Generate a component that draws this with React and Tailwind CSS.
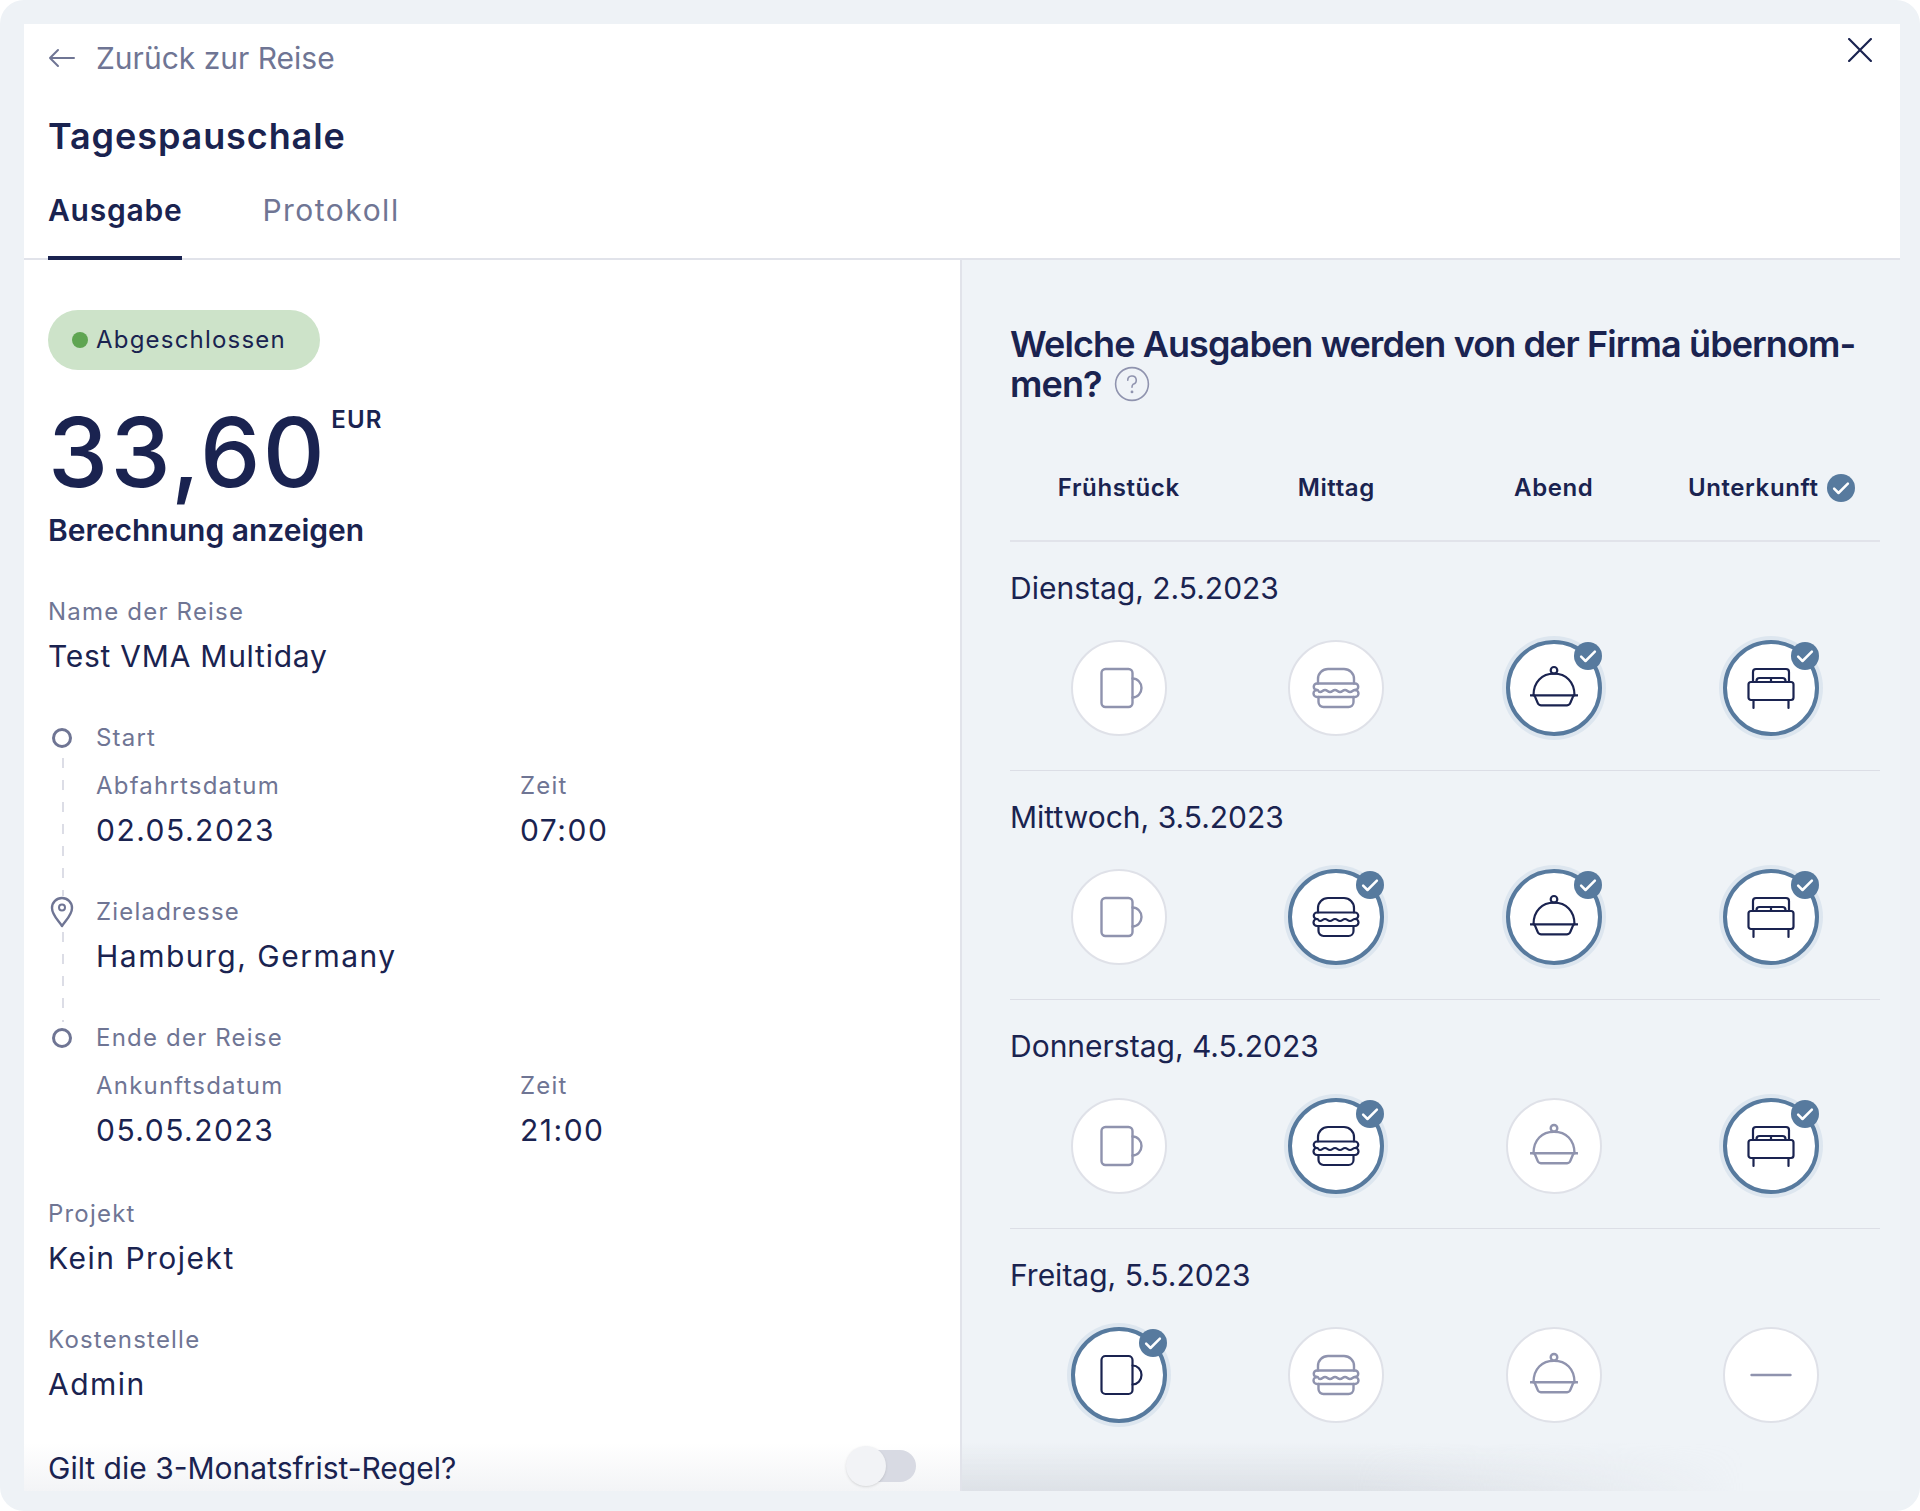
const NAVY = "text-[#1a2350]";

function MugIcon() {
  return (
    <>
      <rect x="6.5" y="5" width="31" height="38" rx="4" />
      <path d="M37.5 14.5A9 9.5 0 0 1 37.5 33.5" />
    </>
  );
}
function BurgerIcon() {
  return (
    <>
      <path d="M6 19.5V15A10 10 0 0 1 16 5H32A10 10 0 0 1 42 15V19.5" />
      <path d="M5 26A3.25 3.25 0 0 1 5 19.5H43A3.25 3.25 0 0 1 43 26C40.500 26 40.500 28 38 28S35.500 26 33 26 30.500 28 28 28 25.500 26 23 26 20.500 28 18 28 15.500 26 13 26 10.500 28 8 28 7.500 26 5 26Z" />
      <path d="M5 26A3.5 3.5 0 0 0 5 33H43A3.5 3.5 0 0 0 43 26" />
      <path d="M6.500 33V38A5 5 0 0 0 11.500 43H36.500A5 5 0 0 0 41.500 38V33" />
    </>
  );
}
function ClocheIcon() {
  return (
    <>
      <circle cx="24" cy="6.300" r="3.300" />
      <path d="M3.500 31.300C3.500 18 12 9.700 24 9.700S44.500 18 44.500 31.300" />
      <path d="M0.500 31.300H47.500" />
      <path d="M4.500 31.300L7.500 38.500A4 4 0 0 0 11 41.300H37A4 4 0 0 0 40.500 38.500L43.500 31.300" />
    </>
  );
}
function BedIcon() {
  return (
    <>
      <path d="M6 18V8A3 3 0 0 1 9 5H39A3 3 0 0 1 42 8V18" />
      <path d="M9.500 18V17A3 3 0 0 1 12.500 14H24V18M24 14H35.500A3 3 0 0 1 38.500 17V18" />
      <rect x="1.500" y="18" width="45" height="18" rx="2.500" />
      <path d="M6.500 36V44M41.500 36V44" />
    </>
  );
}
function DashIcon() {
  return <path d="M4.500 24H43.500" />;
}

const ICONS = { mug: MugIcon, burger: BurgerIcon, cloche: ClocheIcon, bed: BedIcon, dash: DashIcon };

function Check({ className }) {
  return (
    <span className={`flex h-7 w-7 items-center justify-center rounded-full bg-[#577a9e] ${className}`}>
      <svg viewBox="0 0 16 16" className="h-5 w-5" fill="none" stroke="#fff" strokeWidth="2" strokeLinecap="round" strokeLinejoin="round">
        <path d="M2.500 8.500L6 12L13.500 4.500" />
      </svg>
    </span>
  );
}

function Meal({ icon, on }) {
  const Icon = ICONS[icon];
  return (
    <div
      className={`relative flex h-24 w-24 items-center justify-center rounded-full bg-white ${
        on ? "border-4 border-[#577a9e] ring-4 ring-[#dde6ef]" : "border-2 border-[#dfe1e8]"
      }`}
    >
      <svg
        viewBox="0 0 48 48"
        className="h-12 w-12"
        fill="none"
        stroke={on ? "#1a2350" : "#8f93ae"}
        strokeWidth={on ? "2.200" : "2.400"}
        strokeLinecap="round"
        strokeLinejoin="round"
      >
        <Icon />
      </svg>
      {on && <Check className="absolute -top-0.5 -right-1" />}
    </div>
  );
}

const DAYS = [
  { date: "Dienstag, 2.5.2023", meals: [["mug", 0], ["burger", 0], ["cloche", 1], ["bed", 1]] },
  { date: "Mittwoch, 3.5.2023", meals: [["mug", 0], ["burger", 1], ["cloche", 1], ["bed", 1]] },
  { date: "Donnerstag, 4.5.2023", meals: [["mug", 0], ["burger", 1], ["cloche", 0], ["bed", 1]] },
  { date: "Freitag, 5.5.2023", meals: [["mug", 1], ["burger", 0], ["cloche", 0], ["dash", 0]] },
];

function Label({ children }) {
  return <div className="text-2xl leading-8 tracking-wider text-[#6f7594]">{children}</div>;
}
function Value({ children, tight }) {
  return <div className={`mt-2.5 text-3xl leading-9 ${tight ? "tracking-wide" : "tracking-wider"} ${NAVY}`}>{children}</div>;
}
function Ring() {
  return <span className="ml-1 block h-5 w-5 shrink-0 rounded-full border-[3px] border-[#6f7594]" />;
}
function Pin() {
  return (
    <svg viewBox="0 0 24 32" className="ml-0.5 h-8 w-6 shrink-0" fill="none" stroke="#6f7594" strokeWidth="2.400">
      <path d="M12 30C8 24 2 19 2 12A10 10 0 0 1 22 12C22 19 16 24 12 30Z" strokeLinejoin="round" />
      <circle cx="12" cy="11.500" r="3" strokeWidth="2" />
    </svg>
  );
}
function Connector() {
  return (
    <svg className="mt-1 ml-3.5 h-0 w-0.5 grow" preserveAspectRatio="none">
      <line x1="1" y1="0" x2="1" y2="100%" stroke="#dcdde6" strokeWidth="2" strokeDasharray="10 12" />
    </svg>
  );
}
function DateTime({ dateLabel, date, time }) {
  return (
    <div className="mt-4 grid grid-cols-[424px_1fr]">
      <div>
        <Label>{dateLabel}</Label>
        <Value>{date}</Value>
      </div>
      <div>
        <Label>Zeit</Label>
        <Value>{time}</Value>
      </div>
    </div>
  );
}

function Toggle() {
  return (
    <div className="relative -mt-1 h-8 w-14">
      <span className="block h-full w-full rounded-full bg-[#d8dae3]" />
      <span className="absolute -top-1 -left-3.5 h-10 w-10 rounded-full bg-[#f2f3f6] shadow" />
    </div>
  );
}

export default function App() {
  return (
    <div className="h-screen overflow-hidden rounded-3xl bg-[#eef2f6] pt-6 pr-5 pb-5 pl-6 font-['Inter',sans-serif]">
      <div className="flex h-full flex-col overflow-hidden bg-white">
        <header className="border-b-2 border-[#e1e3ea] px-6">
          <div className="flex items-center justify-between pt-4">
            <div className="flex items-center gap-5 text-3xl leading-9 text-[#6f7594]">
              <svg viewBox="0 0 28 20" className="h-5 w-7" fill="none" stroke="#6f7594" strokeWidth="2" strokeLinecap="round" strokeLinejoin="round">
                <path d="M2 10H26M10 2L2 10L10 18" />
              </svg>
              <span>Zurück zur Reise</span>
            </div>
            <svg viewBox="0 0 22 22" className="-mt-4 mr-1 h-6 w-6" fill="none" stroke="#1a2350" strokeWidth="2" strokeLinecap="round">
              <path d="M1 1L21 21M21 1L1 21" />
            </svg>
          </div>
          <h1 className={`mt-10 text-4xl leading-10 font-semibold tracking-wide ${NAVY}`}>Tagespauschale</h1>
          <nav className="mt-9 flex gap-20 text-3xl leading-9">
            <span className={`-mb-0.5 border-b-4 border-[#1a2350] pb-7 font-semibold tracking-wide ${NAVY}`}>Ausgabe</span>
            <span className="tracking-wider text-[#6f7594]">Protokoll</span>
          </nav>
        </header>

        <div className="flex min-h-0 flex-1">
          <section className="relative w-1/2 shrink-0 overflow-hidden border-r-2 border-[#e1e3ea] px-6 pt-12.5">
            <div className={`flex h-15 w-68 items-center gap-2 rounded-full bg-[#cde3c9] pl-6 text-2xl tracking-wider ${NAVY}`}>
              <span className="h-4 w-4 rounded-full bg-[#5fa552]" />
              Abgeschlossen
            </div>
            <div className={`mt-8.5 flex items-start ${NAVY}`}>
              <span className="text-8xl leading-24 font-medium tracking-wide">33,60</span>
              <span className="ml-1 text-2xl leading-8 font-semibold tracking-wider">EUR</span>
            </div>
            <div className={`mt-3 text-3xl leading-9 font-semibold ${NAVY}`}>Berechnung anzeigen</div>

            <div className="mt-12">
              <Label>Name der Reise</Label>
              <Value tight>Test VMA Multiday</Value>
            </div>

            <div className="mt-12 pb-0.5">
              <div className="flex">
                <div className="flex w-12 shrink-0 flex-col">
                  <div className="flex h-8 items-center"><Ring /></div>
                  <Connector />
                </div>
                <div className="flex-1 pb-12">
                  <Label>Start</Label>
                  <DateTime dateLabel="Abfahrtsdatum" date="02.05.2023" time="07:00" />
                </div>
              </div>
              <div className="flex">
                <div className="flex w-12 shrink-0 flex-col">
                  <div className="flex h-8 items-center"><Pin /></div>
                  <Connector />
                </div>
                <div className="flex-1 pb-12">
                  <Label>Zieladresse</Label>
                  <Value>Hamburg, Germany</Value>
                </div>
              </div>
              <div className="flex">
                <div className="flex w-12 shrink-0 flex-col">
                  <div className="flex h-8 items-center"><Ring /></div>
                </div>
                <div className="flex-1">
                  <Label>Ende der Reise</Label>
                  <DateTime dateLabel="Ankunftsdatum" date="05.05.2023" time="21:00" />
                </div>
              </div>
            </div>

            <div className="mt-12">
              <Label>Projekt</Label>
              <Value>Kein Projekt</Value>
            </div>
            <div className="mt-12">
              <Label>Kostenstelle</Label>
              <Value>Admin</Value>
            </div>

            <div className="pointer-events-none absolute inset-x-0 bottom-0 h-12 bg-linear-to-t from-gray-100 to-transparent" />
            <div className="relative mt-12 flex items-center justify-between pr-5">
              <span className={`text-3xl leading-9 ${NAVY}`}>Gilt die 3-Monatsfrist-Regel?</span>
              <Toggle />
            </div>
          </section>

          <section className="relative flex-1 overflow-hidden bg-[#eff3f7] pt-16 pr-5 pl-12">
            <h2 className={`text-4xl leading-10 font-semibold tracking-tight ${NAVY}`}>
              Welche Ausgaben werden von der Firma übernom-
              <br />
              <span className="inline-flex items-center gap-3">
                men?
                <svg viewBox="0 0 34 34" className="h-9 w-9" fill="none" stroke="#8f93ae" strokeWidth="1.500" strokeLinecap="round">
                  <circle cx="17" cy="17" r="15.500" />
                  <path d="M13 13.500A4 4 0 1 1 18 17.300C17.300 17.800 17 18.500 17 20" />
                  <circle cx="17" cy="24.500" r="0.600" fill="#8f93ae" />
                </svg>
              </span>
            </h2>

            <div className="mt-16 grid grid-cols-4 border-b-2 border-[#e1e3ea] pt-1 pb-9">
              {["Frühstück", "Mittag", "Abend"].map((t) => (
                <div key={t} className={`text-center text-2xl leading-8 font-semibold tracking-wide ${NAVY}`}>{t}</div>
              ))}
              <div className={`flex items-center justify-center gap-2 text-2xl leading-8 font-semibold tracking-wide ${NAVY}`}>
                Unterkunft
                <Check />
              </div>
            </div>

            {DAYS.map((d, i) => (
              <div key={d.date} className={`pt-7 pb-8.5 ${i < 3 ? "border-b border-[#dcdee6]" : ""}`}>
                <div className={`text-3xl leading-9 ${NAVY}`}>{d.date}</div>
                <div className="mt-8.5 grid grid-cols-4 justify-items-center">
                  {d.meals.map(([icon, on]) => (
                    <Meal key={icon} icon={icon} on={!!on} />
                  ))}
                </div>
              </div>
            ))}
            <div className="pointer-events-none absolute bottom-0 left-0 h-12 w-5/6 bg-linear-to-t from-gray-300/60 to-transparent [mask-image:linear-gradient(to_right,black_50%,transparent)]" />
          </section>
        </div>
      </div>
    </div>
  );
}
